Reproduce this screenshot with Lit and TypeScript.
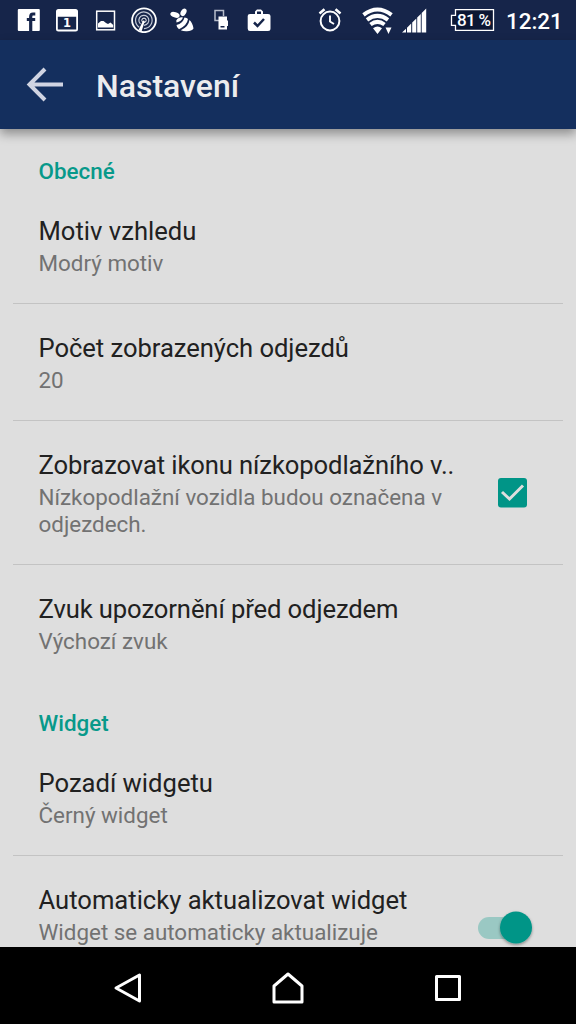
import { LitElement, html, css, svg } from "lit";
import { customElement, property } from "lit/decorators.js";

const notificationIcons = [
  // facebook
  svg`<rect x="1.800" y="2" width="22" height="22" rx="1" fill="#fff"/><path fill="none" stroke="#16254a" stroke-width="3.200" d="M14.700 24V9.700Q14.700 7 17 7H19.300M10.800 12.500H19.200"/>`,
  // calendar
  svg`<path fill="#fff" fill-rule="evenodd" d="M4.500 2H21.500Q24 2 24 4.500V22Q24 24.500 21.500 24.500H4.500Q2 24.500 2 22V4.500Q2 2 4.500 2ZM3.800 9.700V22.500H22.200V9.700Z"/><text x="13" y="20.400" text-anchor="middle" font-family="DejaVu Sans" font-weight="700" font-size="11.500" fill="#fff">1</text>`,
  // picture
  svg`<rect x="3.700" y="4.200" width="17.800" height="18.600" fill="none" stroke="#fff" stroke-width="1.500"/><path fill="#fff" d="M5 20.500V16.500L8 14L10.500 14L13 16L15 17L17.500 15.500L20.200 18V20.500Z"/>`,
  // podcast
  svg`<g fill="none" stroke="#fff"><circle cx="13" cy="13.300" r="11.900" stroke-width="1.800"/><path stroke="#c5cbd8" stroke-width="1.200" d="M8.200 20.200A8.300 8.300 0 1 1 13 21.600M9.500 17A5 5 0 1 1 13 18.300"/><circle cx="13" cy="13.300" r="2.200" stroke-width="1"/></g><path fill="#fff" d="M12.200 13.500L13.800 14L10.500 24.500L7.500 23Z"/>`,
  // bee
  svg`<g fill="#fff"><ellipse cx="6" cy="7.800" rx="4.800" ry="2.700" transform="rotate(18 6 7.800)"/><ellipse cx="14.500" cy="5.300" rx="2.700" ry="4" transform="rotate(28 14.500 5.300)"/><path d="M8.500 11.800Q11 9.500 14 10.500Q12.500 14.500 7.500 15.500Q6.500 13.500 8.500 11.800Z"/><path d="M15.500 10.500Q18 10.500 19 12Q18 18.500 10 22.200Q7.500 20.500 7.500 18Q14 16.500 15.500 10.500Z"/><path d="M20.500 13Q23.500 15.500 24.500 21.500Q22.500 24.500 17 24.200Q14 24.200 11.800 23.200Q19.500 20 20.500 13Z"/></g>`,
  // cards
  svg`<path d="M11 13.500H7V3.500H15.500V9" fill="none" stroke="#b7bdcb" stroke-width="1.500"/><path fill="#fff" fill-rule="evenodd" d="M10.500 9.500H19V13.500H20V19H19V22.500H10.500ZM12.500 19V20.500H16.500V19Z"/>`,
  // briefcase
  svg`<path fill="#fff" fill-rule="evenodd" d="M4 7H9V4.500L11 2.500H15L17 4.500V7H22Q24.500 7 24.500 9V21.500Q24.500 24 22 24H4Q1.700 24 1.700 21.500V9Q1.700 7 4 7ZM11 4.500V7H15V4.500Z"/><path d="M8 15.500L11.500 19L18 12" fill="none" stroke="#16254a" stroke-width="2.500"/>`,
];

@customElement("status-bar")
export class StatusBar extends LitElement {
  static styles = css`
    :host {
      display: flex;
      align-items: center;
      height: 40px;
      box-sizing: border-box;
      padding: 0 14px 0 10px;
      background: #16254a;
      color: #fff;
      flex: none;
    }
    svg { display: block; flex: none; }
    .notes { display: grid; grid-template-columns: repeat(7, 38.3px); justify-items: center; }
    .system { display: flex; align-items: center; margin-left: auto; }
    .wifi { margin-left: 20px; }
    .signal { margin-left: 9px; }
    .battery { margin-left: 23px; }
    .time { font-size: 22.4px; font-weight: 500; line-height: 40px; width: 56px; margin: 2px 0 0 11px; white-space: nowrap; }
  `;
  render() {
    return html`
      <div class="notes">
        ${notificationIcons.map((icon) => html`<svg width="26" height="26" viewBox="0 0 26 26">${icon}</svg>`)}
      </div>
      <div class="system">
        <svg width="24" height="26" viewBox="0 0 24 26" fill="none" stroke="#fff">
          <circle cx="12" cy="14" r="9.400" stroke-width="2"/>
          <path stroke-width="1.900" d="M12 8.500V14.500L16 17"/>
          <path stroke-width="2.600" d="M1.500 6.500L6.500 2.300M22.500 6.500L17.500 2.300"/>
        </svg>
        <svg class="wifi" width="31" height="28" viewBox="0 0 31 28">
          <g fill="none" stroke="#fff" stroke-width="4">
            <path d="M1.500 8.800Q15.500-1.800 29.500 8.800"/>
            <path d="M5 13.800Q15.500 5.900 26 13.800"/>
            <path d="M8.500 18.500Q15.500 13.300 22.500 18.500"/>
          </g>
          <path fill="#fff" d="M11 22.200Q15.500 19 20 22.200L15.500 28ZM23.500 21.500H29.500L26.500 28Z"/>
        </svg>
        <svg class="signal" width="25" height="26" viewBox="0 0 25 26" fill="#fff">
          <path d="M0 25.500L4 21.700V25.500ZM5 20.800L9.200 16.600V25.500H5ZM10.200 15.500L14.300 11.400V25.500H10.200ZM15.200 10.500L18.800 6.900V25.500H15.200ZM19.700 6L24.200 1.500V25.500H19.700Z"/>
        </svg>
        <svg class="battery" width="45" height="24" viewBox="0 0 45 24">
          <path d="M5.500 1.700H43.500V22.300H5.500V17.300H1.500V7.300H5.500Z" fill="#0c1733" stroke="#fff" stroke-width="1.300"/>
          <text x="7" y="17.700" textLength="34" font-family="Roboto" font-weight="500" font-size="17" fill="#fff">81 %</text>
        </svg>
        <span class="time">12:21</span>
      </div>
    `;
  }
}

@customElement("setting-row")
export class SettingRow extends LitElement {
  @property() heading = "";
  @property() summary = "";
  static styles = css`
    :host {
      display: flex;
      align-items: center;
      box-sizing: border-box;
      margin: 0 13px;
      padding: 29px 30px 26.5px 25.5px;
      border-bottom: 1.5px solid #c3c3c3;
    }
    :host([last]) { border-bottom-color: transparent; }
    :host([tight]) .title { letter-spacing: -0.1px; }
    :host([snug]) .title { letter-spacing: -0.05px; }
    :host([tall]) .text { min-height: 86px; }
    .text { flex: 1; min-width: 0; }
    .title { font-size: 25.6px; line-height: 30px; color: #212121; white-space: nowrap; }
    .summary { font-size: 22.4px; line-height: 26.3px; color: #727272; padding-top: 4px; padding-bottom: 0.5px; max-width: 420px; }
  `;
  render() {
    return html`
      <div class="text">
        <div class="title">${this.heading}</div>
        <div class="summary">${this.summary}</div>
      </div>
      <slot></slot>
    `;
  }
}

@customElement("app-root")
export class AppRoot extends LitElement {
  static styles = css`
    :host {
      display: flex;
      flex-direction: column;
      height: 1024px;
      overflow: hidden;
      background: #dedede;
      font-family: Roboto, sans-serif;
    }
    .appbar {
      flex: none;
      display: flex;
      align-items: center;
      height: 89.4px;
      padding-left: 26px;
      box-sizing: border-box;
      background: #142f5e;
      box-shadow: 0 5px 10px rgba(0, 0, 0, 0.36);
      z-index: 1;
    }
    .appbar h1 { margin: 2px 0 0 33px; font-size: 32px; line-height: 40px; font-weight: 500; color: #ececee; }
    svg { display: block; flex: none; }
    .list { flex: 1; min-height: 0; overflow: hidden; padding-top: 0.7px; }
    .category { margin: 0; padding: 28px 0 0 38.5px; font-size: 22.4px; line-height: 26px; font-weight: 500; color: #07998a; }
    .category + setting-row { padding-top: 31.8px; }
    .check { margin: 0 6px 1.6px 0; }
    .switch { margin-right: -1px; }
    .navbar {
      flex: none;
      display: flex;
      align-items: center;
      justify-content: center;
      gap: 130px;
      height: 77px;
      box-sizing: border-box;
      padding: 4px 2px 0 0;
      background: #000;
    }
  `;
  render() {
    return html`
      <status-bar></status-bar>
      <header class="appbar">
        <svg width="37" height="36" viewBox="0 0 37 36" fill="none" stroke="#d0d4e2" stroke-width="4">
          <path d="M19 2L3.500 17.500L19 33M3 17.500H37"/>
        </svg>
        <h1>Nastavení</h1>
      </header>
      <main class="list">
        <h2 class="category">Obecné</h2>
        <setting-row heading="Motiv vzhledu" summary="Modrý motiv"></setting-row>
        <setting-row snug heading="Počet zobrazených odjezdů" summary="20"></setting-row>
        <setting-row tight heading="Zobrazovat ikonu nízkopodlažního v.." summary="Nízkopodlažní vozidla budou označena v odjezdech.">
          <svg class="check" width="29" height="30" viewBox="0 0 29 30">
            <rect width="29" height="29.500" rx="3" fill="#009587"/>
            <path d="M4 14L11.500 21L25 7.500" fill="none" stroke="#dedede" stroke-width="3"/>
          </svg>
        </setting-row>
        <setting-row last tight heading="Zvuk upozornění před odjezdem" summary="Výchozí zvuk"></setting-row>
        <h2 class="category">Widget</h2>
        <setting-row heading="Pozadí widgetu" summary="Černý widget"></setting-row>
        <setting-row last tall heading="Automaticky aktualizovat widget" summary="Widget se automaticky aktualizuje">
          <svg class="switch" width="58" height="40" viewBox="0 0 58 40" overflow="visible">
            <defs><filter id="s" x="-30%" y="-30%" width="160%" height="160%"><feDropShadow dx="0" dy="1.500" stdDeviation="1.500" flood-opacity="0.4"/></filter></defs>
            <rect x="2" y="9" width="48" height="22" rx="11" fill="#9ac8c3"/>
            <circle cx="40" cy="19.500" r="16" fill="#009587" filter="url(#s)"/>
          </svg>
        </setting-row>
      </main>
      <nav class="navbar">
        <svg width="30" height="34" viewBox="0 0 30 34" fill="none" stroke="#fff" stroke-width="3" stroke-linejoin="round">
          <path d="M27.500 4V30L4 17Z"/>
        </svg>
        <svg width="32" height="34" viewBox="0 0 32 34" fill="none" stroke="#fff" stroke-width="3" stroke-linejoin="round">
          <path d="M16 3L30 15V31H2V15Z"/>
        </svg>
        <svg width="28" height="28" viewBox="0 0 28 28" fill="none" stroke="#fff" stroke-width="3" stroke-linejoin="round">
          <rect x="2.500" y="2.500" width="23" height="23"/>
        </svg>
      </nav>
    `;
  }
}
